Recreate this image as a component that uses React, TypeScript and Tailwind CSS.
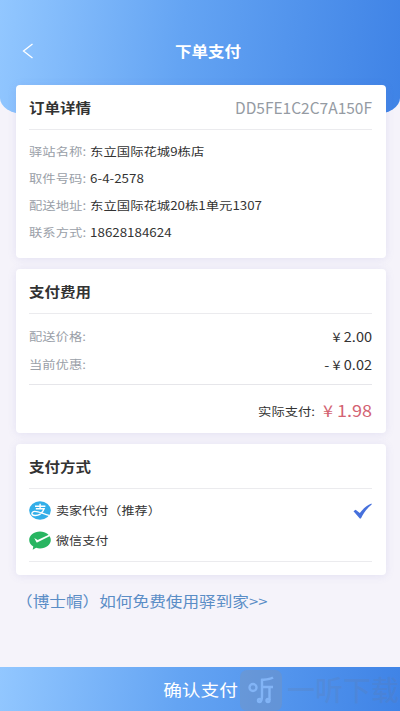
import type { ReactNode } from 'react';
import { clsx } from 'clsx';

type Field = {
  label: string;
  value: string;
};

const orderFields: Field[] = [
  { label: '驿站名称:', value: '东立国际花城9栋店' },
  { label: '取件号码:', value: '6-4-2578' },
  { label: '配送地址:', value: '东立国际花城20栋1单元1307' },
  { label: '联系方式:', value: '18628184624' },
];

const priceFields: Field[] = [
  { label: '配送价格:', value: '¥ 2.00' },
  { label: '当前优惠:', value: '- ¥ 0.02' },
];

// Slightly flattened text, used for every label
function Text({ className, children }: { className?: string; children: ReactNode }) {
  return (
    <span className={clsx('inline-block scale-y-[.88] whitespace-pre leading-none', className)}>
      {children}
    </span>
  );
}

function Card({ className, children }: { className?: string; children: ReactNode }) {
  return (
    <section
      className={clsx(
        'mr-[14.5px] ml-[15.5px] rounded-[4px] bg-white pr-[13.5px] pl-[13.5px] shadow-[0_1px_9px_rgba(110,110,190,0.13)]',
        className,
      )}
    >
      {children}
    </section>
  );
}

function CardTitle({ title, children }: { title: string; children?: ReactNode }) {
  return (
    <div className="flex h-[45px] items-center justify-between border-b border-[#ebebee] pt-[2px]">
      <Text className="text-[15.5px] font-bold text-[#333]">{title}</Text>
      {children}
    </div>
  );
}

function AlipayIcon() {
  return (
    <svg width="22" height="19" viewBox="0 0 22 19" fill="none">
      <ellipse cx="11" cy="9.5" rx="10.8" ry="9.3" fill="#32aee8" />
      <path
        d="M6 5.2h10.4M11.1 2.8v5M6.8 7.800h8.300c-.7 2.100-2.200 4.200-4.300 5.500-2.100 1.300-6.600 1.700-7.600.2-.8-1.500.5-3.100 2.600-3.100 3.700 0 8.500 2.500 14.200 4"
        stroke="#fff"
        strokeWidth="1.4"
      />
    </svg>
  );
}

function WechatPayIcon() {
  return (
    <svg width="22" height="19" viewBox="0 0 22 19">
      <path
        d="M11 .4c6 0 10.8 3.7 10.8 8.5s-4.8 8.5-10.8 8.5c-1.4 0-2.7-.2-3.9-.6L3.7 18.7l.6-3.3C1.8 13.9.2 11.6.2 8.9.2 4.1 5 .4 11 .4Z"
        fill="#28b561"
      />
      <path d="M5.3 7.1 8.7 8.9 20.3 3.500 21 5.100 8.6 11.300Q7.800 11.700 7.300 10.900Z" fill="#fff" />
    </svg>
  );
}

function SelectedIcon() {
  return (
    <svg width="19" height="16" viewBox="0 0 19 16">
      <path d="M.5 8.3 2.6 6.7 6.8 10.1C9.7 6 13.5 2.6 18.5.5L18.7 1.4C14.4 4.9 10.8 9.7 7.9 15.5H6.8Z" fill="#4670dc" />
    </svg>
  );
}

function Watermark() {
  return (
    <div className="absolute top-0 left-[240px] flex h-[44px] items-center">
      <div className="mt-[2px] flex h-[41px] w-[42px] items-center justify-center rounded-[7px] bg-[#8292ae]/35">
        <svg width="27" height="28" viewBox="0 0 27 28" fill="none" stroke="#82b4f6" strokeWidth="2.4">
          <circle cx="5" cy="11.5" r="3.5" />
          <path d="M25 1.5c-3 2-7 2-11 2.3V20c0 3-1 5-2 5M14 11h11M21.5 11v13" />
          <circle cx="11.5" cy="24.5" r="1.5" />
          <circle cx="20" cy="24.5" r="1.5" />
        </svg>
      </div>
      <span className="ml-[5px] text-[28px] leading-none font-medium whitespace-nowrap text-[#68799a]/20">一听下载</span>
    </div>
  );
}

export default function App() {
  return (
    <div className="relative flex h-[711px] w-[400px] flex-col overflow-hidden bg-[#f5f3fa] font-['Noto_Sans_CJK_SC',sans-serif]">
      <header className="h-[114px] shrink-0 [border-radius:0_0_24px_24px/0_0_16px_16px] bg-linear-[96deg,#92c7ff_0%,#64a4f3_45%,#3f83e6_100%] pt-[37px]">
        <div className="grid h-[28px] grid-cols-3 items-center">
          <svg className="ml-[22px]" width="12" height="16" viewBox="0 0 12 16" fill="none">
            <path d="M10.5 1 1.5 8l9 7" stroke="#fff" strokeWidth="1.3" />
          </svg>
          <Text className="ml-[5px] justify-self-center pl-[11px] text-[16.5px] font-bold text-white">下单支付</Text>
        </div>
      </header>

      <main className="relative -mt-[29px] flex flex-1 flex-col">
        <Card className="h-[173px]">
          <CardTitle title="订单详情">
            <Text className="scale-y-100! text-[15.5px] text-[#959ba3]">DD5FE1C2C7A150F</Text>
          </CardTitle>
          <div className="pt-[8.5px]">
            {orderFields.map((field) => (
              <div key={field.label} className="flex h-[27px] items-center gap-[4px] text-[13.35px]">
                <Text className="text-[#9aa0a8]">{field.label}</Text>
                <Text className="text-[#333]">{field.value}</Text>
              </div>
            ))}
          </div>
        </Card>

        <Card className="mt-[11px] h-[164px]">
          <CardTitle title="支付费用" />
          <div className="h-[71px] border-b border-[#e6e6ea] pt-[9px]">
            {priceFields.map((field) => (
              <div key={field.label} className="flex h-[28px] items-center justify-between">
                <Text className="text-[13.3px] text-[#9aa0a8]">{field.label}</Text>
                <Text className="text-[14.5px] text-[#333]">{field.value}</Text>
              </div>
            ))}
          </div>
          <div className="flex h-[49px] items-center justify-end gap-[8px]">
            <Text className="pt-[4px] text-[13.3px] text-[#333]">实际支付:</Text>
            <Text className="text-[18px] text-[#d36272]">¥ 1.98</Text>
          </div>
        </Card>

        <Card className="mt-[11px] h-[131px]">
          <CardTitle title="支付方式" />
          <div className="h-[73px] border-b border-[#ebebee] pt-[7px]">
            <div className="flex h-[29.5px] items-center">
              <AlipayIcon />
              <Text className="ml-[5px] text-[13.1px] text-[#333]">卖家代付（推荐）</Text>
              <span className="ml-auto">
                <SelectedIcon />
              </span>
            </div>
            <div className="flex h-[29.5px] items-center">
              <WechatPayIcon />
              <Text className="ml-[5px] text-[13.1px] text-[#333]">微信支付</Text>
            </div>
          </div>
        </Card>

        <a className="mt-[14px] ml-[16px]">
          <Text className="text-[16.65px] text-[#5a8dc6]">（博士帽）如何免费使用驿到家&gt;&gt;</Text>
        </a>
      </main>

      <footer className="relative flex h-[44px] shrink-0 items-center justify-center bg-linear-[96deg,#92c7ff_0%,#64a4f3_45%,#3f83e6_100%]">
        <Text className="pl-[1px] text-[18.7px] text-white">确认支付</Text>
        <Watermark />
      </footer>
    </div>
  );
}
